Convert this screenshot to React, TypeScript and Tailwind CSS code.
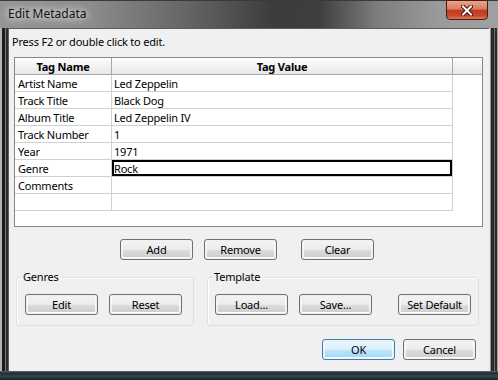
import type { ReactNode } from "react";

const ROWS = [
  { name: "Artist Name", value: "Led Zeppelin" },
  { name: "Track Title", value: "Black Dog" },
  { name: "Album Title", value: "Led Zeppelin IV" },
  { name: "Track Number", value: "1" },
  { name: "Year", value: "1971" },
  { name: "Genre", value: "Rock", editing: true },
  { name: "Comments", value: "" },
  { name: "", value: "" },
];

function Button({ children, w = "w-[73px]", primary = false, className = "" }: { children: ReactNode; w?: string; primary?: boolean; className?: string }) {
  return (
    <div
      className={`${w} h-[21px] shrink-0 rounded-[3px] border p-px ${
        primary ? "border-[#3c7fb1]" : "border-[#707070]"
      } ${className}`}
    >
      <div
        className={`flex h-full items-center justify-center rounded-[2px] border border-white/70 text-[11px] leading-none text-black ${
          primary
            ? "bg-[linear-gradient(180deg,#eaf6fd_0%,#d9f0fc_50%,#bee6fd_51%,#a7d9f5_100%)]"
            : "bg-[linear-gradient(180deg,#f2f2f2_0%,#ebebeb_50%,#dddddd_51%,#cfcfcf_100%)]"
        }`}
      >
        {children}
      </div>
    </div>
  );
}

function CloseButton() {
  return (
    <div className="mr-[10px] mt-[-1px] flex h-[20px] w-[42px] items-center justify-center rounded-b-[4px] border border-[#4a1b10] bg-[linear-gradient(180deg,#e9a48e_0%,#d97b60_45%,#c23a1d_52%,#c9472a_80%,#dc7a55_100%)]">
      <svg width="12" height="11" viewBox="0 0 12 11" aria-hidden="true">
        <path d="M2 1.5 L10 9.5 M10 1.5 L2 9.5" stroke="#3b1209" strokeWidth="4" strokeLinecap="square" />
        <path d="M2 1.5 L10 9.5 M10 1.5 L2 9.5" stroke="#ffffff" strokeWidth="2" strokeLinecap="square" />
      </svg>
    </div>
  );
}

function Group({ label, className, children }: { label: string; className: string; children: ReactNode }) {
  return (
    <div className={`relative h-[49px] rounded-[3px] border border-[#dde1e3] shadow-[inset_1px_1px_0_#ffffff] ${className}`}>
      <span className="absolute left-[5px] top-[-8px] bg-[#f0f0f0] px-px text-[11px] leading-[14px] text-black">{label}</span>
      <div className="mt-[16px] flex">{children}</div>
    </div>
  );
}

export default function App() {
  return (
    <div className="flex h-[380px] w-[498px] flex-col overflow-hidden bg-[#2e3336] font-['Noto_Sans',sans-serif] tracking-[-0.2px]">
      {/* title bar */}
      <div className="flex h-[28px] shrink-0 items-start border-t border-[#3a3a3a] bg-[linear-gradient(90deg,#949494_0%,#8c8c8c_18%,#646464_38%,#3c3c3c_55%,#3e3e3e_64%,#7e7e7e_76%,#9a9a9a_88%,#a0a0a0_100%)]">
        <span className="ml-[8px] mt-[5px] text-[12px] leading-[16px] tracking-normal text-[#111] [text-shadow:0_0_6px_#ffffff,0_0_12px_rgba(255,255,255,0.8)]">
          Edit Metadata
        </span>
        <div className="ml-auto">
          <CloseButton />
        </div>
      </div>

      <div className="flex min-h-0 flex-1">
        <div className="w-[8px] shrink-0 bg-[linear-gradient(90deg,#b4b4b4_0_2px,#1e1e1e_2px_5px,#7a7a7a_5px_6px,#2e2e2e_6px_8px)]" />

        {/* client area */}
        <div className="flex w-[481px] shrink-0 flex-col border-l border-t border-[#5d5d5d] bg-[#f0f0f0]">
          <div className="ml-[3px] mt-[5px] text-[11px] leading-[15px] text-black">Press F2 or double click to edit.</div>

          {/* grid */}
          <div className="ml-[5px] mt-[8px] h-[170px] w-[469px] border border-[#828790] bg-white">
            <div className="grid grid-cols-[97px_341px_29px]">
              <div className="flex h-[17px] items-center justify-center border-b border-r border-[#a8a8a8] bg-[linear-gradient(180deg,#ffffff_0%,#f3f3f3_45%,#e8e8e8_100%)] text-[11px] font-bold leading-none text-black">
                Tag Name
              </div>
              <div className="flex h-[17px] items-center justify-center border-b border-r border-[#a8a8a8] bg-[linear-gradient(180deg,#ffffff_0%,#f3f3f3_45%,#e8e8e8_100%)] text-[11px] font-bold leading-none text-black">
                Tag Value
              </div>
              <div className="h-[17px] border-b border-[#a8a8a8] bg-[linear-gradient(180deg,#ffffff_0%,#f3f3f3_45%,#e8e8e8_100%)]" />

              {ROWS.map((row, i) => (
                <div key={i} className="contents">
                  <div className="flex h-[17px] items-center border-b border-r border-[#d0d0d0] pl-[3px] text-[11px] leading-none text-black">
                    {row.name}
                  </div>
                  <div className="h-[17px] border-b border-r border-[#d0d0d0] text-[11px] leading-none text-black">
                    {row.editing ? (
                      <div className="flex h-full w-[340px] items-center border-2 border-black">{row.value}</div>
                    ) : (
                      <div className="flex h-full items-center pl-[2px]">{row.value}</div>
                    )}
                  </div>
                  <div className="h-[17px]" />
                </div>
              ))}
            </div>
          </div>

          {/* add / remove / clear */}
          <div className="mt-[12px] flex">
            <Button className="ml-[111px]">Add</Button>
            <Button className="ml-[11px]">Remove</Button>
            <Button className="ml-[24px]">Clear</Button>
          </div>

          {/* groups */}
          <div className="mt-[17px] flex">
            <Group label="Genres" className="ml-[7px] w-[178px]">
              <Button className="ml-[8px]">Edit</Button>
              <Button className="ml-[11px]">Reset</Button>
            </Group>
            <Group label="Template" className="ml-[13px] w-[272px]">
              <Button className="ml-[7px]">Load...</Button>
              <Button className="ml-[11px]">Save...</Button>
              <Button className="ml-[26px]">Set Default</Button>
            </Group>
          </div>

          <div className="mt-[13px] flex">
            <Button primary className="ml-[313px]">OK</Button>
            <Button className="ml-[8px]">Cancel</Button>
          </div>
        </div>

        <div className="w-[9px] shrink-0 bg-[linear-gradient(90deg,#e6e6e6_0_1px,#9a9a9a_1px_2px,#2a2a2a_2px_5px,#6e6e6e_5px_6px,#2c2c2c_6px_8px,#a0a0a0_8px_9px)]" />
      </div>

      <div className="h-[9px] shrink-0 bg-[linear-gradient(180deg,#5f6d70_0px,#1f2a2d_2px,#34474c_5px,#1b2326_9px)]" />
    </div>
  );
}
